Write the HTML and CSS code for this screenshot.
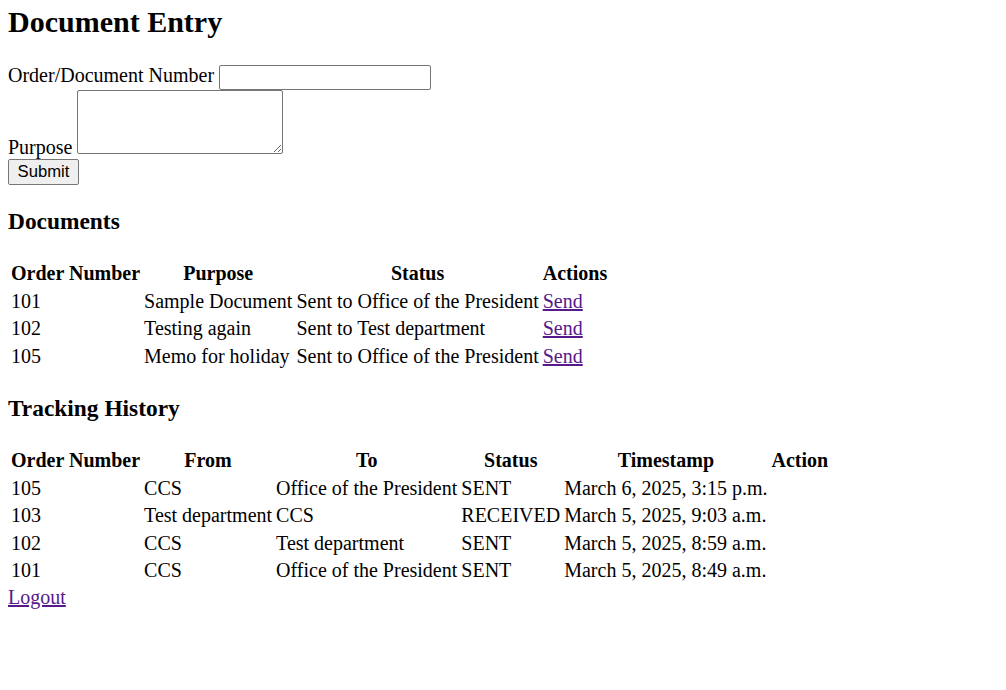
FILE: index.html
```html
<!DOCTYPE html>
<html>
<head>
<meta charset="utf-8">
<title>Document Entry</title>
<link rel="stylesheet" href="styles.css">
</head>
<body class="page">
<h2 class="title">Document Entry</h2>
<form class="entry-form">
<label class="field-label" for="order">Order/Document Number</label> <input class="text-input" id="order" type="text"><br>
<label class="field-label" for="purpose">Purpose</label> <textarea class="text-area" id="purpose"></textarea><br>
<button class="submit-btn" type="button">Submit</button>
</form>
<h3 class="section-title">Documents</h3>
<table class="data-table">
<tr><th>Order Number</th><th>Purpose</th><th>Status</th><th>Actions</th></tr>
<tr><td>101</td><td>Sample Document</td><td>Sent to Office of the President</td><td><a class="link" href="#">Send</a></td></tr>
<tr><td>102</td><td>Testing again</td><td>Sent to Test department</td><td><a class="link" href="#">Send</a></td></tr>
<tr><td>105</td><td>Memo for holiday</td><td>Sent to Office of the President</td><td><a class="link" href="#">Send</a></td></tr>
</table>
<h3 class="section-title">Tracking History</h3>
<table class="data-table">
<tr><th>Order Number</th><th>From</th><th>To</th><th>Status</th><th>Timestamp</th><th>Action</th></tr>
<tr><td>105</td><td>CCS</td><td>Office of the President</td><td>SENT</td><td>March 6, 2025, 3:15 p.m.</td><td></td></tr>
<tr><td>103</td><td>Test department</td><td>CCS</td><td>RECEIVED</td><td>March 5, 2025, 9:03 a.m.</td><td></td></tr>
<tr><td>102</td><td>CCS</td><td>Test department</td><td>SENT</td><td>March 5, 2025, 8:59 a.m.</td><td></td></tr>
<tr><td>101</td><td>CCS</td><td>Office of the President</td><td>SENT</td><td>March 5, 2025, 8:49 a.m.</td><td></td></tr>
</table>
<a class="link" href="#">Logout</a>
</body>
</html>
```
FILE: styles.css
```css
html {
  background: #fff;
}
.page {
  margin: 8px;
  font-family: "Liberation Serif", "Times New Roman", serif;
  font-size: 20px;
  color: #000;
}
.title {
  font-size: 30px;
  font-weight: bold;
  line-height: 28px;
  margin: 0 0 28px;
}
.entry-form {
  margin: 0 0 22px;
}
.text-input {
  box-sizing: border-box;
  width: 212px;
  height: 25px;
  margin: 0;
  padding: 1px 2px;
  border: 1px solid #767676;
  border-radius: 2px;
  font-family: "Liberation Sans", Arial, sans-serif;
  font-size: 16.67px;
  vertical-align: baseline;
}
.text-area {
  box-sizing: border-box;
  width: 206px;
  height: 64px;
  margin: 0;
  padding: 2px;
  border: 1px solid #767676;
  border-radius: 2px;
  font-family: "Liberation Mono", monospace;
  font-size: 16px;
  vertical-align: baseline;
}
.submit-btn {
  box-sizing: border-box;
  width: 71px;
  height: 26px;
  margin: 0;
  padding: 1px 6px;
  background: #efefef;
  border: 1px solid #767676;
  border-radius: 2px;
  font-family: "Liberation Sans", Arial, sans-serif;
  font-size: 16.67px;
  color: #000;
}
.section-title {
  font-size: 23.4px;
  font-weight: bold;
  margin: 23.4px 0 24.4px;
}
.data-table {
  border-collapse: separate;
  border-spacing: 2px;
  font-size: 20px;
}
.data-table th,
.data-table td {
  padding: 1px;
  line-height: 23.5px;
}
.data-table th {
  font-weight: bold;
  text-align: center;
}
.data-table td {
  text-align: left;
}
.link {
  color: #551a8b;
  text-decoration: underline;
}
```
